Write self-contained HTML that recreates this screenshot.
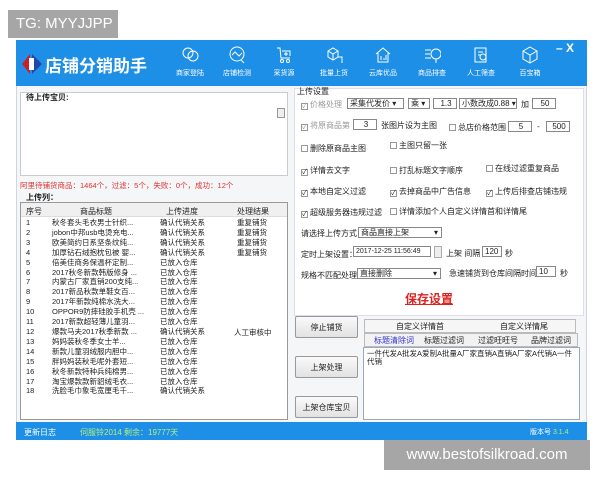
<!DOCTYPE html>
<html><head><meta charset="utf-8"><style>
*{margin:0;padding:0;box-sizing:border-box}
body{width:600px;height:480px;background:#fff;position:relative;overflow:hidden;font-family:"Liberation Sans","Noto Sans CJK SC",sans-serif;font-size:8px;color:#222}
.a{position:absolute;white-space:nowrap}
.tg{left:8px;top:10px;width:110px;height:28px;background:#a6a6a6;color:#fff;font-size:15px;line-height:28px;padding-left:8px}
.web{left:384px;top:440px;width:206px;height:30px;background:#a6a6a6;color:#fff;font-size:15px;line-height:30px;text-align:center}
.win{left:16px;top:40px;width:571px;height:400px;background:#f4f6f8;border:1px solid #cfd6de}
.hdr{left:16px;top:40px;width:571px;height:46px;background:#1e8fe6}
.foot{left:16px;top:422px;width:571px;height:18px;background:#1e8fe6}
.nav{top:46px;width:46px;text-align:center;color:#fff;font-size:7px}
.nav svg{display:block;margin:0 auto 4px}
.box{background:#fff;border:1px solid #c8ccd2}
.cb{display:inline-block;width:7px;height:7px;border:1px solid #999;background:#fff;vertical-align:-1px;margin-right:2px;font-size:7px;line-height:5px;text-align:center}
.sel{background:#fff;border:1px solid #888;height:11px;line-height:9px;padding-left:2px;font-size:8px}
.btn{background:linear-gradient(#fafafa,#e2e2e2);border:1px solid #999;border-radius:2px;text-align:center;line-height:21px;font-size:8px}
.r{font-size:7.5px}
</style></head><body>
<div class="a tg">TG: MYYJJPP</div>
<div class="a win"></div>
<div class="a hdr"></div>
<svg class="a" style="left:20px;top:52px" width="24" height="24" viewBox="0 0 24 24"><path d="M10 2 L2 12 L10 22 Z" fill="#c8202a"/><path d="M12 2 L22 12 L12 22 Z" fill="#2446a8"/><rect x="9" y="6" width="5" height="12" fill="#fff"/></svg>
<div class="a" style="left:45px;top:52px;color:#fff;font-size:17px;font-weight:bold">店铺分销助手</div>
<div class="a nav" style="left:167px"><svg width="18" height="18"><circle cx="7" cy="7" r="5" fill="none" stroke="#fff"/><circle cx="12" cy="10" r="5" fill="none" stroke="#fff"/></svg>商家登陆</div>
<div class="a nav" style="left:214px"><svg width="18" height="18"><circle cx="9" cy="8" r="7" fill="none" stroke="#fff"/><path d="M4 9 L7 6 L11 10 L14 7 M13 14 L16 17" fill="none" stroke="#fff"/></svg>店铺检测</div>
<div class="a nav" style="left:261px"><svg width="18" height="18"><path d="M2 2 L5 2 L6 12 L15 12 M7 5 L15 5 L15 10 M11 6 V10 M9 8 H13" fill="none" stroke="#fff"/><circle cx="7" cy="15" r="1.5" fill="none" stroke="#fff"/><circle cx="13" cy="15" r="1.5" fill="none" stroke="#fff"/></svg>采货源</div>
<div class="a nav" style="left:311px"><svg width="18" height="18"><path d="M3 5 L8 2 L13 5 L13 11 L8 14 L3 11 Z M3 5 L8 8 L13 5 M8 8 V14 M13 11 H17 V17" fill="none" stroke="#fff"/></svg>批量上货</div>
<div class="a nav" style="left:360px"><svg width="18" height="18"><path d="M2 8 L9 2 L16 8 M4 7 V16 H14 V7 M7 10 V14 M10 12 V14 M12 9 V14" fill="none" stroke="#fff"/></svg>云库优品</div>
<div class="a nav" style="left:409px"><svg width="18" height="18"><path d="M2 4 H8 M2 8 H7 M2 12 H8 M13 13 V17" fill="none" stroke="#fff"/><circle cx="13" cy="8" r="5" fill="none" stroke="#fff"/></svg>商品排查</div>
<div class="a nav" style="left:458px"><svg width="18" height="18"><path d="M3 2 H14 V16 H3 Z M6 6 H11 M6 9 H9" fill="none" stroke="#fff"/><circle cx="11" cy="11" r="3" fill="none" stroke="#fff"/></svg>人工筛查</div>
<div class="a nav" style="left:507px"><svg width="18" height="18"><path d="M9 1 L16 5 L16 13 L9 17 L2 13 L2 5 Z M2 5 L9 9 L16 5 M9 9 V17" fill="none" stroke="#fff"/></svg>百宝箱</div>
<div class="a" style="left:556px;top:41px;color:#fff;font-size:12px;font-weight:bold">– X</div>

<div class="a box" style="left:20px;top:92px;width:268px;height:84px"></div>
<div class="a" style="left:26px;top:92px;font-weight:bold;font-size:8px">待上传宝贝:</div>
<div class="a" style="left:277px;top:108px;width:8px;height:10px;border:1px solid #999;background:#eee"></div>
<div class="a" style="left:20px;top:180px;color:#d33;font-size:7.5px">阿里待铺货商品：1464个，过滤：5个，失败：0个，成功：12个</div>
<div class="a" style="left:26px;top:192px;font-weight:bold;font-size:8px">上传列：</div>
<div class="a box" style="left:20px;top:202px;width:268px;height:218px;border-color:#999"></div>
<div class="a" style="left:21px;top:203px;width:266px;height:14px;background:#f0f0f0;border-bottom:1px solid #ddd"></div>
<div class="a" style="left:26px;top:206px">序号</div><div class="a" style="left:80px;top:206px">商品标题</div><div class="a" style="left:166px;top:206px">上传进度</div><div class="a" style="left:237px;top:206px">处理结果</div>
<div class="a r" style="left:26px;top:218px;line-height:9.9px">1<br>2<br>3<br>4<br>5<br>6<br>7<br>8<br>9<br>10<br>11<br>12<br>13<br>14<br>15<br>16<br>17<br>18</div>
<div class="a r" style="left:52px;top:218px;line-height:9.9px">秋冬套头毛衣男士针织...<br>jobon中邦usb电烫充电...<br>欧美简约日系坚条纹纯...<br>加厚钻石绒抱枕包被 婴...<br>倍美佳商务保温杯定制...<br>2017秋冬新款韩版修身 ...<br>内蒙古厂家直销200支纯...<br>2017新品秋款单鞋女百...<br>2017年新款纯棉水洗大...<br>OPPOR9防摔硅胶手机壳 ...<br>2017新款超轻薄儿童羽...<br>爆款马夫2017秋季新款 ...<br>妈妈装秋冬季女士羊...<br>新款儿童羽绒服内胆中...<br>胖妈妈装秋毛呢外套短...<br>秋冬新款特种兵纯棉男...<br>淘宝爆款款新貂绒毛衣...<br>洗脸毛巾象毛宽厘毛千...</div>
<div class="a r" style="left:160px;top:218px;line-height:9.9px">确认代销关系<br>确认代销关系<br>确认代销关系<br>确认代销关系<br>已放入仓库<br>已放入仓库<br>已放入仓库<br>已放入仓库<br>已放入仓库<br>已放入仓库<br>已放入仓库<br>确认代销关系<br>已放入仓库<br>已放入仓库<br>已放入仓库<br>已放入仓库<br>已放入仓库<br>确认代销关系</div>
<div class="a r" style="left:237px;top:218px;line-height:9.9px">重复铺货<br>重复铺货<br>重复铺货<br>重复铺货</div>
<div class="a r" style="left:234px;top:327px">人工审核中</div>

<div class="a" style="left:294px;top:88px;width:290px;height:228px;background:#fff;border:1px solid #dde"></div>
<div class="a" style="left:297px;top:86px">上传设置</div>
<div class="a" style="left:301px;top:99px;color:#999"><span class="cb">✓</span>价格处理</div>
<div class="a sel" style="left:347px;top:98px;width:57px">采集代发价 ▾</div>
<div class="a sel" style="left:408px;top:98px;width:22px">乘 ▾</div>
<div class="a sel" style="left:433px;top:98px;width:24px;text-align:center">1.3</div>
<div class="a sel" style="left:459px;top:98px;width:58px">小数改成0.88 ▾</div>
<div class="a" style="left:521px;top:99px">加</div>
<div class="a sel" style="left:532px;top:98px;width:24px;text-align:center">50</div>
<div class="a" style="left:301px;top:120px;color:#999"><span class="cb">✓</span>将原商品第</div>
<div class="a sel" style="left:353px;top:119px;width:24px;text-align:center">3</div>
<div class="a" style="left:381px;top:120px">张图片设为主图</div>
<div class="a" style="left:449px;top:122px"><span class="cb"></span>总店价格范围</div>
<div class="a sel" style="left:508px;top:121px;width:24px;text-align:center">5</div>
<div class="a" style="left:537px;top:122px">-</div>
<div class="a sel" style="left:546px;top:121px;width:24px;text-align:center">500</div>
<div class="a" style="left:301px;top:143px"><span class="cb"></span>删除原商品主图</div>
<div class="a" style="left:390px;top:140px"><span class="cb"></span>主图只留一张</div>
<div class="a" style="left:301px;top:165px"><span class="cb">✓</span>详情去文字</div>
<div class="a" style="left:390px;top:165px"><span class="cb"></span>打乱标题文字顺序</div>
<div class="a" style="left:486px;top:163px"><span class="cb"></span>在线过滤重复商品</div>
<div class="a" style="left:301px;top:186px"><span class="cb">✓</span>本地自定义过滤</div>
<div class="a" style="left:390px;top:186px"><span class="cb">✓</span>去掉商品中广告信息</div>
<div class="a" style="left:486px;top:186px"><span class="cb">✓</span>上传后排查店铺违规</div>
<div class="a" style="left:301px;top:207px"><span class="cb">✓</span>超级服务器违规过滤</div>
<div class="a" style="left:390px;top:206px"><span class="cb"></span>详情添加个人自定义详情首和详情尾</div>
<div class="a" style="left:301px;top:228px">请选择上传方式</div>
<div class="a sel" style="left:358px;top:227px;width:84px">商品直接上架<span style="float:right;margin-right:3px">▾</span></div>
<div class="a" style="left:301px;top:249px">定时上架设置：</div>
<div class="a sel" style="left:353px;top:246px;width:78px;font-size:7px">2017-12-25 11:56:49</div>
<div class="a" style="left:434px;top:246px;width:8px;height:12px;border:1px solid #aaa;background:#eee"></div>
<div class="a" style="left:446px;top:248px">上架 间隔</div>
<div class="a sel" style="left:482px;top:246px;width:20px">120</div>
<div class="a" style="left:505px;top:248px">秒</div>
<div class="a" style="left:301px;top:270px">规格不匹配处理</div>
<div class="a sel" style="left:357px;top:268px;width:84px">直接删除<span style="float:right;margin-right:3px">▾</span></div>
<div class="a" style="left:449px;top:268px">急速铺货到仓库间隔时间：</div>
<div class="a sel" style="left:536px;top:266px;width:20px">10</div>
<div class="a" style="left:560px;top:268px">秒</div>
<div class="a" style="left:405px;top:290px;color:#d22;font-size:12px;font-weight:bold;text-decoration:underline">保存设置</div>

<div class="a btn" style="left:295px;top:316px;width:63px;height:22px">停止铺货</div>
<div class="a btn" style="left:295px;top:356px;width:63px;height:22px">上架处理</div>
<div class="a btn" style="left:295px;top:396px;width:63px;height:22px">上架仓库宝贝</div>
<div class="a" style="left:364px;top:319px;width:212px;height:14px;border:1px solid #bbb;background:#f6f6f6"></div>
<div class="a" style="left:396px;top:321px">自定义详情首</div><div class="a" style="left:500px;top:321px">自定义详情尾</div>
<div class="a" style="left:364px;top:333px;width:214px;height:14px;border:1px solid #bbb;background:#f2f2f2"></div>
<div class="a" style="left:374px;top:335px;color:#33c">标题清除词</div><div class="a" style="left:424px;top:335px">标题过滤词</div><div class="a" style="left:478px;top:335px">过滤旺旺号</div><div class="a" style="left:531px;top:335px">品牌过滤词</div>
<div class="a box" style="left:363px;top:347px;width:217px;height:73px;border-color:#9ab"></div>
<div class="a" style="left:367px;top:350px;font-size:7.5px;line-height:8px">一件代发A批发A爱制A批量A厂家直销A直销A厂家A代销A一件<br>代销</div>

<div class="a foot"></div>
<div class="a" style="left:24px;top:427px;color:#fff;font-size:8px">更新日志</div>
<div class="a" style="left:80px;top:427px;color:#b6f07a;font-size:8px">伺服铃2014 剩余：19777天</div>
<div class="a" style="left:530px;top:427px;color:#fff;font-size:7px">版本号 <span style="color:#b6f07a">3.1.4</span></div>
<div class="a web">www.bestofsilkroad.com</div>
</body></html>
